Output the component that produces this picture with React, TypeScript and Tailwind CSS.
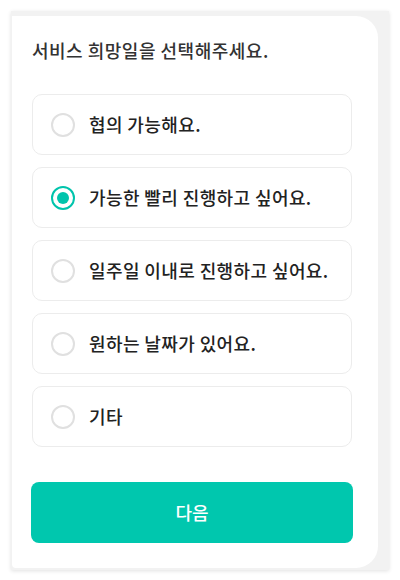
import { useState } from 'react'

const OPTIONS = [
  '협의 가능해요.',
  '가능한 빨리 진행하고 싶어요.',
  '일주일 이내로 진행하고 싶어요.',
  '원하는 날짜가 있어요.',
  '기타',
]

export default function App() {
  const [selected, setSelected] = useState(1)

  return (
    <div
      className="w-[400px] h-[580px] bg-white p-[11px]"
      style={{ fontFamily: '"Noto Sans CJK KR", "Noto Sans", sans-serif' }}
    >
      <div className="bg-[#f2f2f2] h-[559px] pl-[1px] pt-[5px] pr-[11px] pb-[2px] shadow-[0_1px_4px_rgba(0,0,0,0.12)]">
        <div className="bg-white h-full rounded-r-[22px] rounded-bl-[4px] pt-[22px] pl-[20px] pr-[26px] flex flex-col">
          <h2 className="text-[18px] leading-[24px] tracking-[0.5px] text-[#333] font-medium">서비스 희망일을 선택해주세요.</h2>

          <div className="mt-[32px] flex flex-col gap-[12px]">
            {OPTIONS.map((label, i) => {
              const active = selected === i
              return (
                <button
                  key={label}
                  type="button"
                  onClick={() => setSelected(i)}
                  className="h-[61px] w-[320px] flex items-center pl-[18px] border border-[#ececec] rounded-[10px] bg-white text-left"
                >
                  {active ? (
                    <span className="w-[24px] h-[24px] rounded-full border-[2.5px] border-[#00c4ac] flex items-center justify-center">
                      <span className="w-[12px] h-[12px] rounded-full bg-[#00c4ac]" />
                    </span>
                  ) : (
                    <span className="w-[24px] h-[24px] rounded-full border-2 border-[#e0e0e0]" />
                  )}
                  <span className="ml-[14px] text-[18px] tracking-[0.4px] font-medium text-[#222]">{label}</span>
                </button>
              )
            })}
          </div>

          <button
            type="button"
            className="mt-[35px] -ml-[1px] w-[322px] h-[61px] rounded-[8px] bg-[#00c7ae] text-white text-[18px] font-medium"
          >
            다음
          </button>
        </div>
      </div>
    </div>
  )
}
